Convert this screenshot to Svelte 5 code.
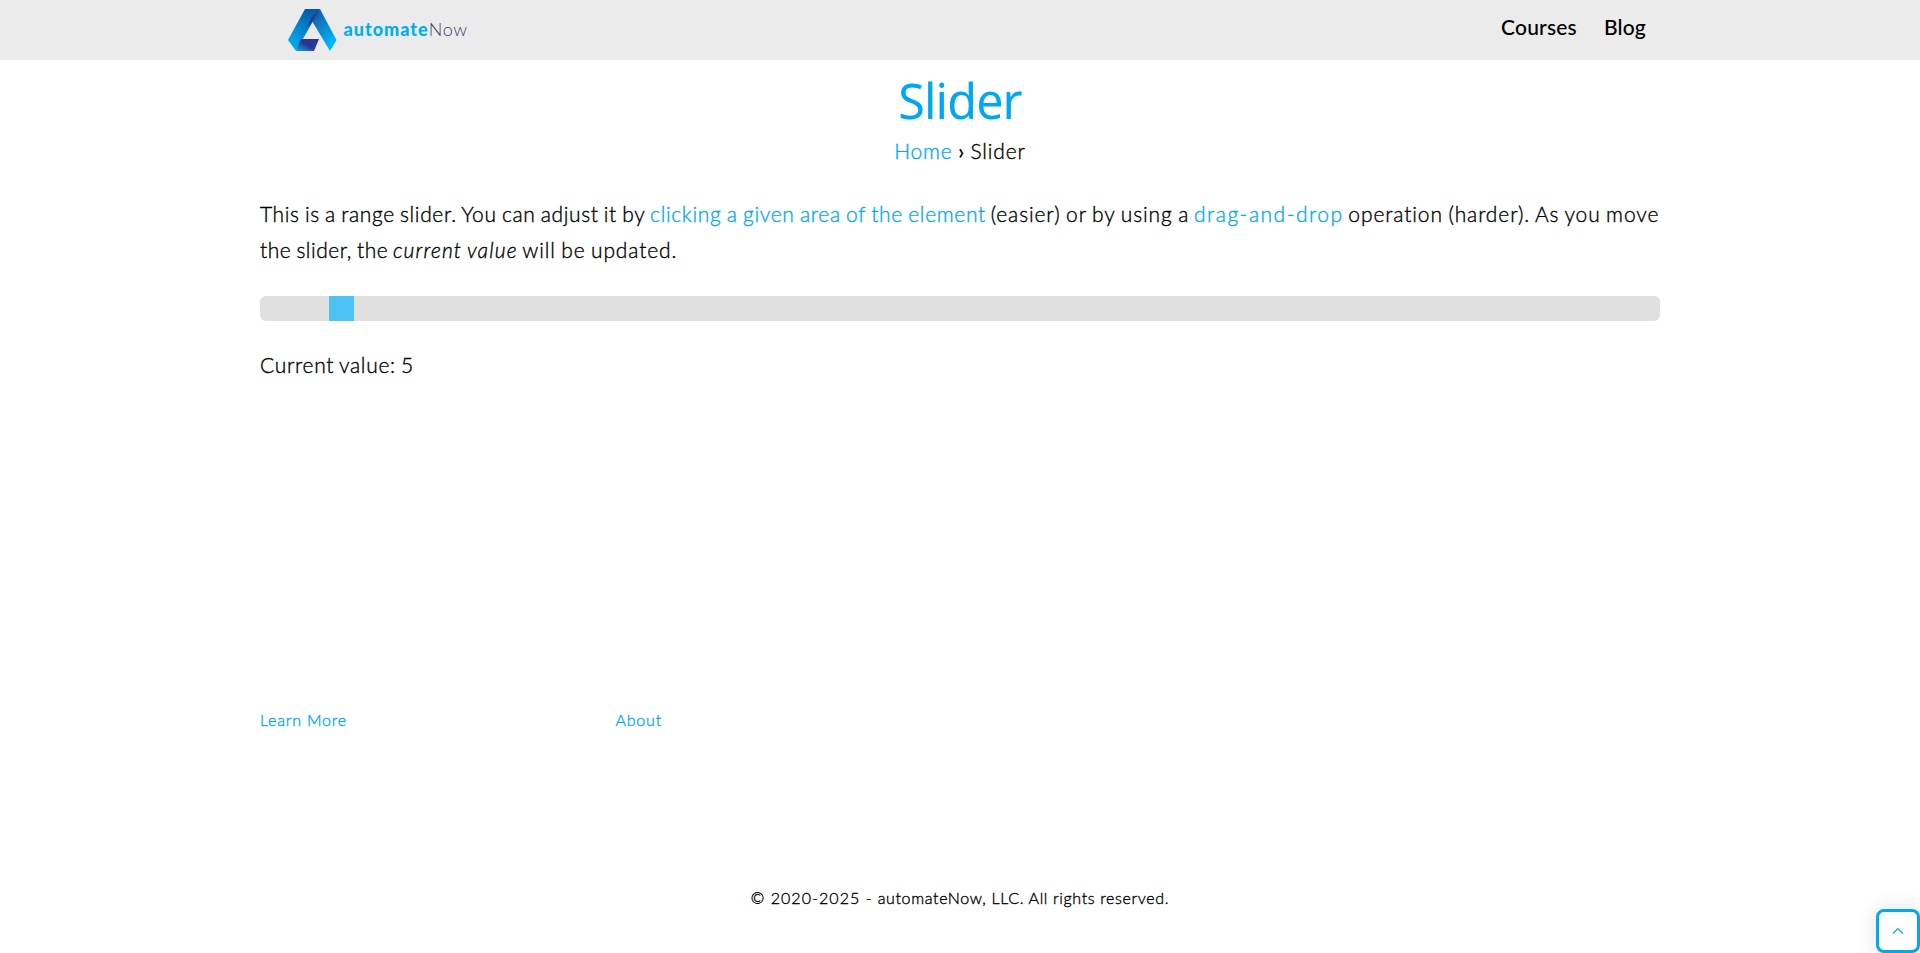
<script>
  let value = $state(5);
  const offset = $derived(69 + (value - 5) * 13.5);
</script>

<header>
  <div class="bar">
    <a class="brand" href="#home" aria-label="automateNow">
      <svg class="mark" viewBox="0 0 49 43" width="49" height="43" aria-hidden="true">
        <defs>
          <linearGradient id="left" x1="0.7" y1="0" x2="0.2" y2="1">
            <stop offset="0" stop-color="#075aa8" />
            <stop offset="1" stop-color="#00b1f0" />
          </linearGradient>
          <linearGradient id="right" x1="0.2" y1="0" x2="0.8" y2="1">
            <stop offset="0" stop-color="#1756a4" />
            <stop offset="0.85" stop-color="#00b5f4" />
          </linearGradient>
          <linearGradient id="foot" x1="0" y1="1" x2="1" y2="0">
            <stop offset="0" stop-color="#06aeea" />
            <stop offset="0.5" stop-color="#2a3690" />
          </linearGradient>
        </defs>
        <path d="M17 0H32L8 42L0 31Z" fill="url(#left)" />
        <path d="M32 0L48.5 31L42 42L24 12Z" fill="url(#right)" />
        <path d="M32 0L25 12L19 19L23 9Z" fill="#293a94" />
        <path d="M13 30H31L26 42H8Z" fill="url(#foot)" />
      </svg>
      <span class="word"><b>automate</b><span>Now</span></span>
    </a>
    <nav>
      <a class="courses" href="#courses">Courses</a>
      <a class="blog" href="#blog">Blog</a>
    </nav>
  </div>
</header>

<main>
  <h1>Slider</h1>
  <div class="crumbs"><a href="#home">Home</a><b>›</b><span>Slider</span></div>
  <p class="intro">
    <span class="s1">This is a range slider. You can adjust it by</span>
    <a class="s2" href="#click">clicking a given area of the element</a>
    <span class="s3">(easier) or by using a</span>
    <a class="s4" href="#drag">drag-and-drop</a>
    <span class="s5">operation (harder). As you move</span><br />
    <span class="s6">the slider, the</span> <em>current value</em> <span class="s7">will be updated.</span>
  </p>
  <div class="track"><div class="thumb" style="margin-left: {offset}px"></div></div>
  <p class="current">Current value: {value}</p>
</main>

<footer>
  <div class="links">
    <a class="learn" href="#learn">Learn More</a>
    <a class="about" href="#about">About</a>
  </div>
  <p class="copy"><span>© 2020-2025 -</span> automateNow, LLC. All rights reserved.</p>
</footer>

<a class="top" href="#top" aria-label="Back to top">
  <svg viewBox="0 0 12 8" width="12" height="8" aria-hidden="true">
    <path d="M1 6.5L6 1.5L11 6.5" fill="none" stroke="#00a8ed" stroke-width="1.2" />
  </svg>
</a>

<style>
  :global(body) {
    margin: 0;
    height: 953px;
    overflow: hidden;
    background: #fff;
    color: #000;
    font-family: Lato, sans-serif;
  }
  a {
    color: #00a8f3;
    text-decoration: none;
  }
  header {
    height: 60px;
    background: #ebebeb;
  }
  .bar,
  main,
  .links {
    width: 1400px;
    margin: 0 auto;
  }
  .bar {
    display: flex;
    justify-content: space-between;
    height: 60px;
  }
  .brand {
    display: flex;
    padding: 9px 0 0 27.5px;
  }
  .word {
    margin-left: 7px;
    font-size: 18px;
    line-height: 40px;
    white-space: nowrap;
  }
  .word b {
    font-weight: 900;
    color: #00aeef;
    letter-spacing: 1px;
  }
  .word span {
    font-weight: 300;
    color: #3c3b70;
    letter-spacing: 0.7px;
  }
  nav {
    display: flex;
    gap: 27px;
    padding-right: 14px;
    line-height: 53px;
    font-size: 21px;
    letter-spacing: 0.2px;
    white-space: nowrap;
  }
  nav a {
    color: #000;
    font-weight: 500;
  }
  h1 {
    margin: 0;
    padding-top: 8px;
    color: #00a8f3;
    font: 400 48.5px/64px "Noto Sans", sans-serif;
    letter-spacing: -0.9px;
    text-align: center;
  }
  .crumbs,
  .intro,
  .current,
  footer {
    font-weight: 300;
    -webkit-text-stroke: 0.35px currentColor;
  }
  .crumbs {
    display: flex;
    justify-content: center;
    gap: 5.5px;
    padding-top: 1px;
    font-size: 21px;
    line-height: 36px;
    letter-spacing: 0.85px;
  }
  .intro {
    margin: 27px 0 0;
    font-size: 21px;
    line-height: 36px;
    word-spacing: -1px;
    white-space: nowrap;
  }
  .s1 {
    letter-spacing: 0.62px;
  }
  .s2 {
    letter-spacing: 0.67px;
  }
  .s3 {
    letter-spacing: 0.88px;
  }
  .s4 {
    letter-spacing: 1.5px;
  }
  .s5 {
    letter-spacing: 0.87px;
  }
  .s6 {
    letter-spacing: 0.5px;
  }
  .intro em {
    letter-spacing: 1.12px;
  }
  .s7 {
    letter-spacing: 0.85px;
  }
  .track {
    height: 25px;
    margin-top: 28px;
    border-radius: 6px;
    background: #e0e0e0;
    overflow: hidden;
  }
  .thumb {
    width: 25px;
    height: 25px;
    background: #4dc2f5;
  }
  .current {
    margin: 26px 0 0;
    font-size: 21px;
    line-height: 36px;
    letter-spacing: 0.68px;
    word-spacing: -1px;
  }
  .links {
    display: flex;
    margin-top: 323px;
    font-size: 16px;
    line-height: 28px;
    letter-spacing: 0.8px;
  }
  .learn {
    width: 355.5px;
  }
  .copy {
    margin: 150px 0 0;
    font-size: 16px;
    line-height: 28px;
    letter-spacing: 0.65px;
    text-align: center;
  }
  .copy span {
    letter-spacing: 1.05px;
  }
  .top {
    position: fixed;
    right: 0;
    bottom: 0;
    display: flex;
    align-items: center;
    justify-content: center;
    box-sizing: border-box;
    width: 44px;
    height: 44px;
    border: 3px solid #00a8ed;
    border-radius: 8px;
    background: #fff;
    box-shadow: 0 0 20px rgba(0, 0, 0, 0.12);
  }
</style>
